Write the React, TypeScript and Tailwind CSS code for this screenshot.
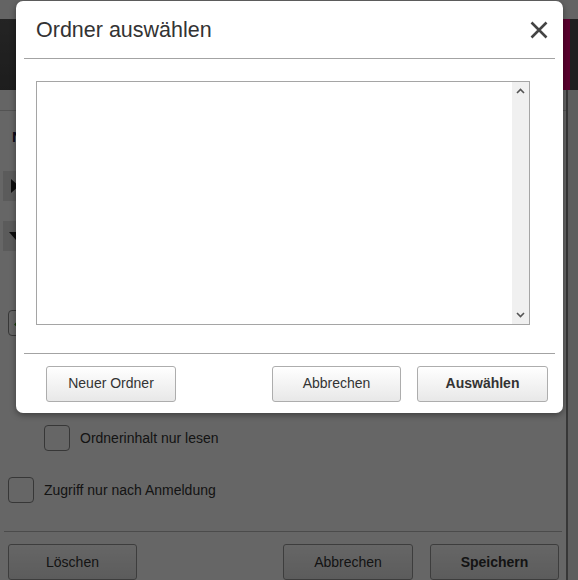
const font = { fontFamily: '"Liberation Sans", Arial, sans-serif' };

const Checkbox = ({ checked }: { checked?: boolean }) => (
  <div className="w-[26px] h-[26px] rounded-[4px] border border-[#8a8a8a] bg-white flex items-center justify-center shrink-0">
    {checked && (
      <svg width="16" height="16" viewBox="0 0 16 16">
        <path d="M2 8.5l4 4 8-9" fill="none" stroke="#3c9a1c" strokeWidth="2.5" />
      </svg>
    )}
  </div>
);

const PageButton = ({ label, bold, className }: { label?: string; bold?: boolean; className?: string }) => (
  <div
    className={`h-[36px] rounded-[3px] border border-[#9a9a9a] bg-gradient-to-b from-white to-[#e6e6e6] flex items-center justify-center text-[14px] text-[#333] ${bold ? 'font-bold' : ''} ${className ?? ''}`}
  >
    {label}
  </div>
);

const DialogButton = ({ label, bold, className }: { label: string; bold?: boolean; className?: string }) => (
  <button
    className={`h-[36px] rounded-[3px] border border-[#adadad] bg-gradient-to-b from-white to-[#e8e8e8] text-[14px] text-[#333] ${bold ? 'font-bold' : ''} ${className ?? ''}`}
  >
    {label}
  </button>
);

// page behind the modal overlay
const BackgroundPage = () => (
  <div className="w-full h-full flex flex-col bg-[#f2f2f2]">
    <div className="h-[19px] bg-[#fafafa]" />
    <div className="h-[71px] flex bg-gradient-to-b from-[#5a5a5a] to-[#4a4a4a]">
      <div className="flex-1" />
      <div className="w-[8px] bg-[#e20074]" />
      <div className="w-[8px] bg-[#505050]" />
    </div>
    <div className="flex flex-1 min-h-0">
      <div className="w-[568px] bg-white border-r-2 border-[#8a8a8a] flex flex-col">
        <div className="h-[23px] bg-[#fcfcfc] border-b border-[#cfcfcf]" />
        <div className="px-[12px] pt-[15px] text-[15px] text-[#1c1c44] font-bold">Name</div>
        <div className="mt-[22px] ml-[3px] w-[60px] h-[32px] bg-[#e4e4e4] flex items-center pl-[8px]">
          <svg width="8" height="14" viewBox="0 0 8 14"><path d="M0 0l8 7-8 7z" fill="#222" /></svg>
        </div>
        <div className="mt-[20px] ml-[3px] w-[60px] h-[33px] bg-[#e4e4e4] flex items-center pl-[6px]">
          <svg width="14" height="8" viewBox="0 0 14 8"><path d="M0 0h14l-7 8z" fill="#222" /></svg>
        </div>
        <div className="mt-[59px] ml-[8px] flex items-center gap-[10px] text-[14px] text-[#333]">
          <Checkbox checked />
          <span>Ordner freigeben</span>
        </div>
        <div className="mt-[37px] ml-[44px] flex gap-[16px]">
          <div className="w-[403px] h-[36px] rounded-[3px] border border-[#9a9a9a] bg-white" />
          <PageButton className="w-[97px]" />
        </div>
        <div className="mt-[16px] ml-[44px] flex items-center gap-[10px] text-[14px] text-[#333]">
          <Checkbox />
          <span>Ordnerinhalt nur lesen</span>
        </div>
        <div className="mt-[26px] ml-[8px] flex items-center gap-[10px] text-[14px] text-[#333]">
          <Checkbox />
          <span>Zugriff nur nach Anmeldung</span>
        </div>
        <div className="mt-[28px] mx-[4px] h-px bg-[#bbb]" />
        <div className="mt-[12px] pl-[8px] pr-[7px] flex">
          <PageButton label="Löschen" className="w-[129px]" />
          <div className="flex-1" />
          <PageButton label="Abbrechen" className="w-[130px]" />
          <PageButton label="Speichern" bold className="w-[129px] ml-[17px]" />
        </div>
      </div>
      <div className="flex-1 bg-[#ececec]" />
    </div>
  </div>
);

export default function App() {
  return (
    <div className="relative w-[578px] h-[580px] overflow-hidden" style={font}>
      <BackgroundPage />
      <div className="absolute inset-0 bg-black/60" />
      <div className="absolute left-[16px] top-[1px] w-[547px] h-[412px] bg-white rounded-[7px] shadow-[0_2px_6px_rgba(0,0,0,0.4)] flex flex-col">
        <div className="h-[57px] flex items-center justify-between pl-[20px] pr-[15px]">
          <h2 className="text-[21.5px] text-[#333] pt-[1px]">Ordner auswählen</h2>
          <svg width="18" height="18" viewBox="0 0 18 18">
            <path d="M1.5 1.5l15 15M16.5 1.5l-15 15" stroke="#444" strokeWidth="2.6" />
          </svg>
        </div>
        <div className="mx-[8px] h-px bg-[#a3a3a3]" />
        <div className="flex-1 pt-[22px] pl-[20px] pr-[33px]">
          <div className="h-[244px] border border-[#a5a5a5] bg-white flex justify-end">
            <div className="w-[17px] bg-[#f0f0f0] flex flex-col items-center justify-between py-[6px]">
              <svg width="9" height="6" viewBox="0 0 9 6"><path d="M1 5l3.5-3.5L8 5" fill="none" stroke="#555" strokeWidth="1.6" /></svg>
              <svg width="9" height="6" viewBox="0 0 9 6"><path d="M1 1l3.5 3.5L8 1" fill="none" stroke="#555" strokeWidth="1.6" /></svg>
            </div>
          </div>
        </div>
        <div className="mx-[8px] h-px bg-[#a3a3a3]" />
        <div className="h-[59px] flex items-center pl-[30px] pr-[15px]">
          <DialogButton label="Neuer Ordner" className="w-[130px]" />
          <div className="flex-1" />
          <DialogButton label="Abbrechen" className="w-[129px]" />
          <DialogButton label="Auswählen" bold className="w-[131px] ml-[16px]" />
        </div>
      </div>
    </div>
  );
}
